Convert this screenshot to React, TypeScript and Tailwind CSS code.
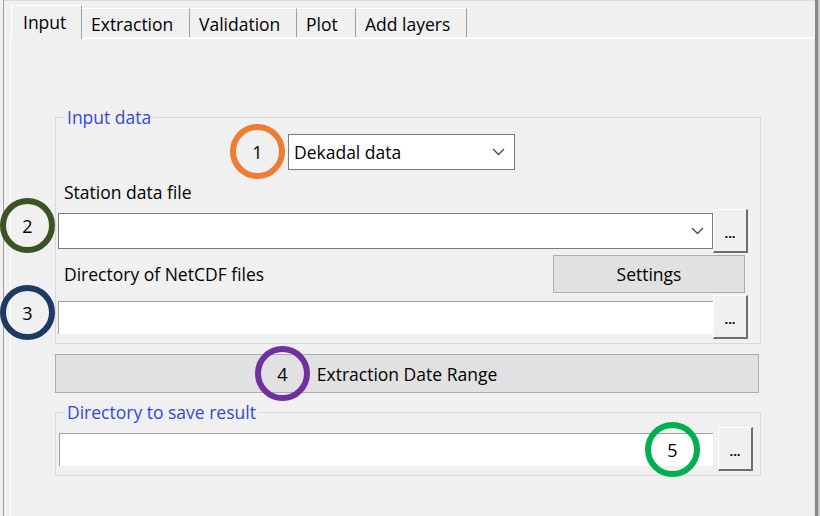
import React from 'react';

const tabs = [
    { label: 'Extraction', w: 'w-[108px]' },
    { label: 'Validation', w: 'w-[107px]' },
    { label: 'Plot', w: 'w-[59px]' },
    { label: 'Add layers', w: 'w-[111px]' },
];

const Chevron: React.FC = () => (
    <svg width="13" height="8" viewBox="0 0 13 8" className="shrink-0">
        <polyline points="1,1 6.5,6.5 12,1" fill="none" stroke="#4a4a4a" strokeWidth="1.3" />
    </svg>
);

// raised classic "..." browse button
const BrowseButton: React.FC<{ className?: string }> = ({ className }) => (
    <button
        className={
            'w-[35px] h-[44px] shrink-0 bg-[#f0f0f0] border-t border-l border-white border-r-2 border-b-2 border-r-[#6e6e6e] border-b-[#6e6e6e] flex justify-center items-center pt-[6px] text-[13px] font-bold leading-none ' +
            (className || '')
        }
    >
        ...
    </button>
);

const Marker: React.FC<{ n: number; color: string; pos: string }> = ({ n, color, pos }) => (
    <div
        className={'absolute w-[55px] h-[55px] rounded-full border-[6px] flex items-center justify-center text-[18px] leading-none text-black ' + pos}
        style={{ borderColor: color }}
    >
        {n}
    </div>
);

const App: React.FC = () => {
    return (
        <div className="relative w-[820px] h-[516px] bg-[#f0f0f0] flex overflow-hidden font-['Open_Sans',sans-serif] text-[17.5px] leading-[22px] text-black">
            <div className="w-[3px] shrink-0" />
            <div className="w-px shrink-0 bg-[#a0a0a0]" />

            <div className="flex-1 flex flex-col border-t border-[#dcdcdc]">
                {/* Tab strip */}
                <div className="h-[36px] flex items-end pl-[7px]">
                    <div className="relative z-10 w-[71px] h-[34px] -mb-[2px] bg-[#f0f0f0] border-t border-l border-white border-r border-r-[#a0a0a0] pl-[11px] pt-[5px]">
                        Input
                    </div>
                    {tabs.map(t => (
                        <div
                            key={t.label}
                            className={t.w + ' h-[29px] border-t border-white border-r border-r-[#a0a0a0] pl-[9px] pt-[4px] whitespace-nowrap'}
                        >
                            {t.label}
                        </div>
                    ))}
                </div>

                {/* Tab page */}
                <div className="flex-1 ml-[6px] border-t-2 border-l border-white border-r border-r-[#e3e3e3]">
                    <fieldset className="ml-[44px] mt-[68px] w-[706px] border border-[#d9d9d9] pb-[4px]">
                        <legend className="ml-[9px] px-[2px] leading-[20px] text-[#3349e2]">Input data</legend>

                        <div className="ml-[232px] mt-[7px] w-[227px] h-[36px] bg-white border border-[#7a7a7a] flex items-center pl-[5px] pr-[9px]">
                            <span className="flex-1">Dekadal data</span>
                            <Chevron />
                        </div>

                        <div className="pl-[8px] mt-[11px]">Station data file</div>

                        <div className="flex items-center ml-[2px] mt-[6px]">
                            <div className="w-[655px] h-[36px] bg-white border border-[#7a7a7a] flex items-center justify-end pr-[8px]">
                                <Chevron />
                            </div>
                            <BrowseButton />
                        </div>

                        <div className="flex items-center mt-[2px]">
                            <span className="pl-[8px]">Directory of NetCDF files</span>
                            <button className="ml-auto mr-[15px] w-[192px] h-[38px] bg-[#e1e1e1] border border-[#adadad]">Settings</button>
                        </div>

                        <div className="flex items-center ml-[2px] mt-[2px]">
                            <div className="w-[655px] h-[33px] bg-white border-t border-l border-[#a0a0a0]" />
                            <BrowseButton className="h-[42px]" />
                        </div>
                    </fieldset>

                    <button className="ml-[44px] mt-[10px] w-[704px] h-[39px] bg-[#e1e1e1] border border-[#adadad]">
                        Extraction Date Range
                    </button>

                    <fieldset className="ml-[44px] mt-[9px] w-[706px] border border-[#d9d9d9] pb-[4px]">
                        <legend className="ml-[9px] px-[2px] leading-[20px] text-[#3349e2]">Directory to save result</legend>
                        <div className="flex items-center ml-[3px] mt-[5px]">
                            <div className="w-[654px] h-[33px] bg-white border-t border-l border-[#a0a0a0]" />
                            <BrowseButton className="ml-[5px]" />
                        </div>
                    </fieldset>
                </div>
            </div>

            <div className="w-[3px] shrink-0 bg-[#888888]" />
            <div className="w-[2px] shrink-0 bg-[#c8c8c8]" />

            <Marker n={1} color="#ed7d31" pos="left-[230px] top-[124px]" />
            <Marker n={2} color="#3a5424" pos="left-[0px] top-[198px]" />
            <Marker n={3} color="#203864" pos="left-[0px] top-[285px]" />
            <Marker n={4} color="#7030a0" pos="left-[255px] top-[346px]" />
            <Marker n={5} color="#00b050" pos="left-[645px] top-[422px]" />
        </div>
    );
};

export default App;
